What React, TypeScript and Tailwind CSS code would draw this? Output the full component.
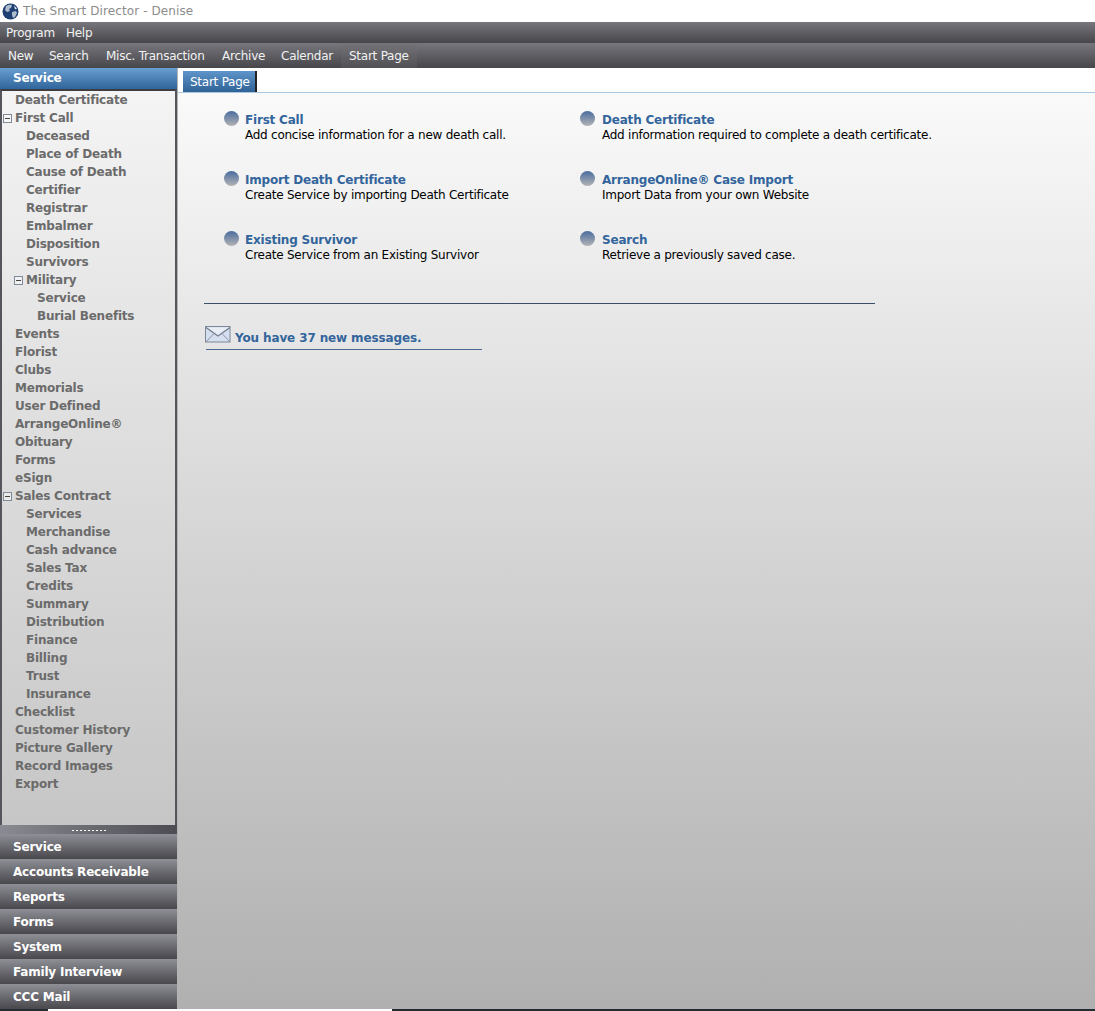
const font = "font-['DejaVu_Sans','Liberation_Sans',sans-serif]";

type Row = { t: string; d: number; m?: boolean };
const tree: Row[] = [
  { t: 'Death Certificate', d: 0 }, { t: 'First Call', d: 0, m: true },
  { t: 'Deceased', d: 1 }, { t: 'Place of Death', d: 1 }, { t: 'Cause of Death', d: 1 }, { t: 'Certifier', d: 1 },
  { t: 'Registrar', d: 1 }, { t: 'Embalmer', d: 1 }, { t: 'Disposition', d: 1 }, { t: 'Survivors', d: 1 },
  { t: 'Military', d: 1, m: true }, { t: 'Service', d: 2 }, { t: 'Burial Benefits', d: 2 },
  { t: 'Events', d: 0 }, { t: 'Florist', d: 0 }, { t: 'Clubs', d: 0 }, { t: 'Memorials', d: 0 }, { t: 'User Defined', d: 0 },
  { t: 'ArrangeOnline®', d: 0 }, { t: 'Obituary', d: 0 }, { t: 'Forms', d: 0 }, { t: 'eSign', d: 0 },
  { t: 'Sales Contract', d: 0, m: true }, { t: 'Services', d: 1 }, { t: 'Merchandise', d: 1 }, { t: 'Cash advance', d: 1 },
  { t: 'Sales Tax', d: 1 }, { t: 'Credits', d: 1 }, { t: 'Summary', d: 1 }, { t: 'Distribution', d: 1 }, { t: 'Finance', d: 1 },
  { t: 'Billing', d: 1 }, { t: 'Trust', d: 1 }, { t: 'Insurance', d: 1 }, { t: 'Checklist', d: 0 }, { t: 'Customer History', d: 0 },
  { t: 'Picture Gallery', d: 0 }, { t: 'Record Images', d: 0 }, { t: 'Export', d: 0 },
];
const tasks = [
  ['First Call', 'Add concise information for a new death call.'],
  ['Death Certificate', 'Add information required to complete a death certificate.'],
  ['Import Death Certificate', 'Create Service by importing Death Certificate'],
  ['ArrangeOnline® Case Import', 'Import Data from your own Website'],
  ['Existing Survivor', 'Create Service from an Existing Survivor'],
  ['Search', 'Retrieve a previously saved case.'],
];
const navs = ['Service', 'Accounts Receivable', 'Reports', 'Forms', 'System', 'Family Interview', 'CCC Mail'];
const tools = [['New', 'w-[41px]'], ['Search', 'w-[57px]'], ['Misc. Transaction', 'w-[116px]'], ['Archive', 'w-[59px]'], ['Calendar', 'w-[68px]'], ['Start Page', 'w-[76px] bg-gradient-to-b from-[#747479] to-[#505055]']];

function Minus() {
  return (
    <span className="flex h-[9px] w-[9px] shrink-0 items-center justify-center border border-[#7f8a9a] bg-white/40">
      <span className="h-px w-[5px] bg-[#444]" />
    </span>
  );
}

function Globe() {
  return (
    <svg width="17" height="17" viewBox="0 0 17 17" className="shrink-0">
      <circle cx="8.5" cy="8.5" r="8" fill="#1d3f73" />
      <path d="M4 3c2-1 4-1.500 6-1l-1 3-2 1 1 2-3 1-2-2zM10 9l4-1 1 2-2 4-2 1-1-3z" fill="#aebccd" />
      <path d="M12 2.500l3 3-2 1z" fill="#dfe6ee" />
    </svg>
  );
}

function Mail() {
  return (
    <svg width="26" height="17" viewBox="0 0 26 17" className="-ml-px mb-[3px] shrink-0">
      <rect x="0.500" y="0.500" width="24.500" height="15.500" fill="#d5dff0" stroke="#7e8797" />
      <path d="M1 1.500l12 8.500 12-8.500" fill="#e8edf6" stroke="#737c8c" strokeWidth="1.300" />
      <path d="M1 16l8-8.500M25 16l-8-8.500" fill="none" stroke="#8b94a3" />
    </svg>
  );
}

export default function App() {
  return (
    <div className={`${font} flex h-[1011px] w-[1095px] flex-col overflow-hidden bg-white text-[12px] tracking-[-0.25px]`}>
      <div className="flex h-[22px] items-center gap-[4px] pl-[2px] text-[12px] tracking-[0.1px] text-[#8c8c8c]">
        <Globe />
        <span>The Smart Director - Denise</span>
      </div>
      <div className="flex h-[21px] items-center gap-[11px] bg-gradient-to-b from-[#77777d] to-[#46464b] pl-[6px] text-[#f2f2f2]">
        <span>Program</span>
        <span>Help</span>
      </div>
      <div className="flex h-[25px] items-stretch bg-gradient-to-b from-[#77777d] to-[#46464b] text-[#f2f2f2]">
        {tools.map(([t, p]) => (
          <span key={t} className={`flex items-center pl-[8px] ${p}`}>{t}</span>
        ))}
      </div>
      <div className="flex min-h-0 flex-1">
        <aside className="flex w-[177px] shrink-0 flex-col font-bold tracking-[-0.2px]">
          <div className="flex h-[21px] items-center bg-gradient-to-b from-[#6a9fd2] to-[#30659b] pb-[2px] pl-[13px] text-white">Service</div>
          <div className="h-[736px] border-x-2 border-t-2 border-x-[#55555c] border-t-[#3d3d44] bg-gradient-to-b from-[#f4f4f4] to-[#c6c6c6]">
            {tree.map((r, i) => (
              <div
                key={i}
                className={`flex h-[18px] items-center text-[#6b6b6b] ${r.d === 0 ? 'pl-[13px]' : r.d === 1 ? 'pl-[24px]' : 'pl-[35px]'}`}
              >
                {r.m && <span className="-ml-[12px] mr-[3px]"><Minus /></span>}
                <span>{r.t}</span>
              </div>
            ))}
          </div>
          <div className="flex h-[9px] items-center justify-center gap-[2px] bg-gradient-to-r from-[#8a8a92] to-[#4c4c52] pt-px">
            {Array.from({ length: 9 }).map((_, i) => (
              <span key={i} className="h-px w-[2px] bg-white" />
            ))}
          </div>
          {navs.map((n) => (
            <div key={n} className="flex h-[25px] items-center bg-gradient-to-b from-[#8f8f97] to-[#48484d] pl-[13px] text-white">{n}</div>
          ))}
        </aside>
        <main className="flex min-w-0 flex-1 flex-col border-l border-[#b4b4b4]">
          <div className="flex h-[25px] items-end border-b border-[#a9c6e2] bg-white pl-[5px]">
            <span className="flex h-[21px] w-[74px] items-center border-r-2 border-[#222] bg-gradient-to-b from-[#5f95ca] to-[#2f6396] pl-[7px] text-white">Start Page</span>
          </div>
          <div className="flex-1 bg-gradient-to-b from-[#fafafa] to-[#b0b0b0] pl-[26px]">
            <div className="grid grid-cols-[356px_356px] auto-rows-[60px] pl-[20px] pt-[18px]">
              {tasks.map(([a, b], i) => (
                <div key={a} className={`flex ${i % 2 ? 'gap-[7px]' : 'gap-[6px]'}`}>
                  <span className="h-[15px] w-[15px] shrink-0 rounded-full bg-gradient-to-b from-[#4a6c9e] to-[#b3b3b3]" />
                  <div className="whitespace-nowrap">
                    <div className="pt-px font-bold leading-[16px] tracking-[-0.2px] text-[#33659c]">{a}</div>
                    <div className="leading-[14px] text-black">{b}</div>
                  </div>
                </div>
              ))}
            </div>
            <div className="mt-[12px] h-px w-[671px] bg-[#3c4f66]" />
            <div className="ml-[2px] mt-[22px] flex w-[276px] items-end gap-[4px] border-b border-[#4a6a92] pb-[3px]">
              <Mail />
              <span className="font-bold leading-[16px] tracking-[-0.13px] text-[#33659c]">You have 37 new messages.</span>
            </div>
          </div>
        </main>
      </div>
      <div className="flex h-[2px] shrink-0 bg-[#222c33]">
        <span className="ml-[48px] w-[344px] bg-white" />
      </div>
    </div>
  );
}
